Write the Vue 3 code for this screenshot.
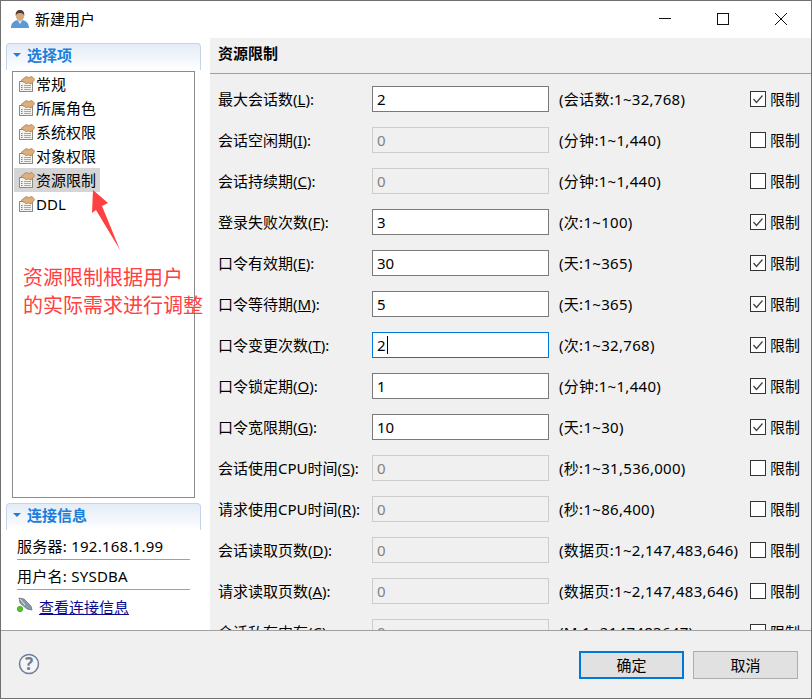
<script setup>
const items = ['常规', '所属角色', '系统权限', '对象权限', '资源限制', 'DDL']
const rows = [
  { label: '最大会话数', key: 'L', value: '2', hint: '(会话数:1~32,768)', on: true },
  { label: '会话空闲期', key: 'I', value: '0', hint: '(分钟:1~1,440)', on: false },
  { label: '会话持续期', key: 'C', value: '0', hint: '(分钟:1~1,440)', on: false },
  { label: '登录失败次数', key: 'F', value: '3', hint: '(次:1~100)', on: true },
  { label: '口令有效期', key: 'E', value: '30', hint: '(天:1~365)', on: true },
  { label: '口令等待期', key: 'M', value: '5', hint: '(天:1~365)', on: true },
  { label: '口令变更次数', key: 'T', value: '2', hint: '(次:1~32,768)', on: true, focus: true },
  { label: '口令锁定期', key: 'O', value: '1', hint: '(分钟:1~1,440)', on: true },
  { label: '口令宽限期', key: 'G', value: '10', hint: '(天:1~30)', on: true },
  { label: '会话使用CPU时间', key: 'S', value: '0', hint: '(秒:1~31,536,000)', on: false },
  { label: '请求使用CPU时间', key: 'R', value: '0', hint: '(秒:1~86,400)', on: false },
  { label: '会话读取页数', key: 'D', value: '0', hint: '(数据页:1~2,147,483,646)', on: false },
  { label: '请求读取页数', key: 'A', value: '0', hint: '(数据页:1~2,147,483,646)', on: false },
  { label: '会话私有内存', key: 'C', value: '0', hint: '(M:1~2147483647)', on: false },
]
</script>

<template>
  <div class="win">
    <header class="titlebar">
      <svg class="user-ico" width="20" height="20" viewBox="0 0 20 20">
        <path d="M1 19c0-5 3-7 6-8l3 2 3-2c3 1 6 3 6 8z" fill="#5b9bd5" />
        <path d="M8 12l2 3 2-3-2 1z" fill="#e8f2fb" />
        <ellipse cx="10" cy="7" rx="4" ry="5" fill="#d9a67e" />
        <path d="M5.800 7C5 2 8 1 10 1s5 1 4.200 6c-.5-2-1.500-3-4.200-3S6.300 5 5.800 7z" fill="#4d3c33" />
      </svg>
      <span class="title">新建用户</span>
      <div class="win-btns">
        <svg width="14" height="14" viewBox="0 0 14 14"><path d="M1 6.500h12" stroke="#111" fill="none" /></svg>
        <svg width="14" height="14" viewBox="0 0 14 14"><rect x="1.500" y="1.500" width="11" height="11" stroke="#111" fill="none" /></svg>
        <svg width="14" height="14" viewBox="0 0 14 14"><path d="M1 1l12 12M13 1L1 13" stroke="#111" fill="none" /></svg>
      </div>
    </header>

    <div class="body">
      <aside class="side">
        <div class="sec-head">
          <i class="tri"></i><span>选择项</span>
        </div>
        <ul class="tree">
          <li v-for="it in items" :key="it" :class="{ sel: it === '资源限制' }">
            <svg width="17" height="17" viewBox="0 0 17 17">
              <rect x="1.500" y="5.500" width="13" height="10" fill="#f2f2ee" stroke="#8c8c84" />
              <path d="M3 9.500h1.500M3 11.500h1.500M3 13.500h1.500" stroke="#4f8fcf" />
              <path d="M6 9.500h7M6 11.500h7M6 13.500h7" stroke="#a8a8a8" />
              <path d="M3 4.500L8 .5l2.500 1L14 .5l2.800 3L13 8l-2.500-1L8 7.500 5.500 6z" fill="#dcae7c" stroke="#a9794a" stroke-width=".7" />
            </svg>
            <span>{{ it }}</span>
          </li>
        </ul>
        <div class="sec-head second">
          <i class="tri"></i><span>连接信息</span>
        </div>
        <div class="info">
          <div class="info-row">服务器: 192.168.1.99</div>
          <div class="info-row">用户名: SYSDBA</div>
          <div class="info-link">
            <svg width="18" height="18" viewBox="0 0 18 18">
              <path d="M2 1l5 1 7 7 1 4-5-1-7-6z" fill="#8b98a8" stroke="#5e6a78" stroke-width=".7" />
              <path d="M3 2l5 6" stroke="#e4e8ec" />
              <circle cx="3" cy="12" r="2.700" fill="#4fc81e" stroke="#2f8f10" stroke-width=".6" />
            </svg>
            <a>查看连接信息</a>
          </div>
        </div>
      </aside>

      <main class="main">
        <h2 class="main-head">资源限制</h2>
        <div class="rows">
          <div v-for="r in rows" :key="r.label" class="row">
            <label class="lbl">{{ r.label }}(<u>{{ r.key }}</u>):</label>
            <div class="input" :class="{ off: !r.on, focus: r.focus }">
              {{ r.value }}<i v-if="r.focus" class="caret"></i>
            </div>
            <span class="hint">{{ r.hint }}</span>
            <span class="check">
              <svg v-if="r.on" width="14" height="14" viewBox="0 0 14 14"><path d="M2.500 7l3 3.500 6-7" stroke="#444" stroke-width="1.300" fill="none" /></svg>
            </span>
            <span class="lim">限制</span>
          </div>
        </div>
      </main>
    </div>

    <footer class="foot">
      <svg width="22" height="22" viewBox="0 0 22 22" class="help">
        <circle cx="11" cy="11" r="9.500" fill="#f4f5f8" stroke="#6f7d96" stroke-width="1.500" />
        <text x="11" y="17" text-anchor="middle" class="q">?</text>
      </svg>
      <div class="btns">
        <div class="btn primary">确定</div>
        <div class="btn">取消</div>
      </div>
    </footer>

    <svg class="arrow" width="40" height="66" viewBox="0 0 40 66">
      <path d="M2 2L17 15 11 18 29 62 5 22 1 25z" fill="#ff4040" />
    </svg>
    <div class="note">资源限制根据用户<br />的实际需求进行调整</div>
  </div>
</template>

<style>
html, body { margin: 0; overflow: hidden; background: #fff; }
</style>

<style scoped>
.win {
  position: relative;
  width: 812px;
  height: 699px;
  box-sizing: border-box;
  border: 1px solid #707070;
  display: flex;
  flex-direction: column;
  background: #fff;
  color: #000;
  font: 15px/20px "Noto Sans", "Noto Sans CJK SC", sans-serif;
  overflow: hidden;
}
.titlebar {
  flex: 0 0 37px;
  display: flex;
  align-items: center;
  padding-left: 9px;
  padding-bottom: 1px;
  box-sizing: border-box;
  background: #fff;
}
.title { margin-left: 5px; }
.win-btns {
  margin-left: auto;
  display: flex;
  gap: 44px;
  padding-right: 23px;
}
.win-btns svg { display: block; }
.body { flex: 1; display: flex; min-height: 0; }
.side {
  flex: 0 0 209px;
  box-sizing: border-box;
  padding: 5px 9px 0 5px;
  display: flex;
  flex-direction: column;
  background: #fff;
}
.sec-head {
  flex: none;
  height: 27px;
  box-sizing: border-box;
  border: 1px solid #c5d5e6;
  border-bottom: 0;
  border-radius: 4px 4px 0 0;
  background: linear-gradient(#e4ecf6, #ffffff);
  display: flex;
  align-items: center;
  padding: 0 0 5px 6px;
  gap: 6px;
  font-weight: 700;
  color: #1a7fdc;
  margin-bottom: 1px;
}
.sec-head.second { margin: 5px 0 0; }
.tri {
  width: 0;
  height: 0;
  border: 4px solid transparent;
  border-top: 4px solid #1a7fdc;
  border-bottom: 0;
}
.tree {
  flex: none;
  list-style: none;
  margin: 0 6px 0 6px;
  padding: 0 1px;
  height: 427px;
  box-sizing: border-box;
  border: 1px solid #8c8c8c;
  background: #fff;
}
.tree li {
  width: 86px;
  height: 24px;
  display: flex;
  align-items: center;
  box-sizing: border-box;
  padding-left: 4px;
  gap: 1px;
  white-space: nowrap;
}
.tree li svg { flex: none; }
.tree li.sel { background: #d5d5d5; }
.info { padding: 0 11px 0 11px; }
.info-row {
  height: 30px;
  line-height: 32px;
  box-sizing: border-box;
  border-bottom: 1px solid #a0a0a0;
  letter-spacing: .25px;
}
.info-link {
  display: flex;
  align-items: center;
  margin-top: 7px;
  gap: 4px;
  height: 20px;
}
.info-link svg { margin-top: -3px; }
.info-link a { color: #0a0a90; text-decoration: underline; }
.main {
  flex: 1;
  background: #f0f0f0;
  min-width: 0;
  overflow: hidden;
  display: flex;
  flex-direction: column;
}
.main-head {
  flex: none;
  margin: 0;
  height: 36px;
  box-sizing: border-box;
  border-bottom: 1px solid #a0a0a0;
  padding: 5px 0 0 8px;
  font-size: 15px;
  line-height: 20px;
  font-weight: 700;
}
.rows {
  flex: none;
  padding-top: 12px;
  display: flex;
  flex-direction: column;
  gap: 15px;
}
.row {
  height: 26px;
  display: flex;
  align-items: center;
  flex: none;
  padding-left: 8px;
}
.lbl { flex: 0 0 154px; white-space: nowrap; }
.input {
  flex: 0 0 177px;
  height: 26px;
  box-sizing: border-box;
  border: 1px solid #7a7a7a;
  background: #fff;
  padding-left: 4px;
  line-height: 25px;
  display: flex;
  align-items: center;
}
.input.off { border-color: #cccccc; background: #f0f0f0; color: #838383; }
.input.focus { border-color: #0078d7; }
.caret { display: block; width: 1px; height: 18px; background: #000; margin-left: 1px; }
.hint { flex: 0 0 191px; margin-left: 10px; white-space: nowrap; letter-spacing: .3px; }
.check {
  flex: 0 0 16px;
  height: 16px;
  box-sizing: border-box;
  border: 1px solid #333;
  background: #fff;
  display: flex;
  align-items: center;
  justify-content: center;
}
.lim { margin-left: 4px; white-space: nowrap; }
.foot {
  flex: 0 0 68px;
  box-sizing: border-box;
  border-top: 1px solid #a0a0a0;
  background: #f0f0f0;
  display: flex;
  align-items: flex-start;
  padding: 20px 13px 0 17px;
}
.help { margin-top: 2px; }
.q { font: 700 17px "Noto Sans", sans-serif; fill: #6f7d96; }
.btns { margin-left: auto; display: flex; gap: 9px; }
.btn {
  width: 105px;
  height: 28px;
  box-sizing: border-box;
  border: 1px solid #adadad;
  background: #e1e1e1;
  display: flex;
  align-items: center;
  justify-content: center;
}
.btn.primary { border: 2px solid #0078d7; }
.arrow { position: absolute; left: 90px; top: 187px; }
.note {
  position: absolute;
  left: 22px;
  top: 263px;
  font-size: 20px;
  line-height: 28px;
  color: #ff4040;
  white-space: nowrap;
}
</style>
